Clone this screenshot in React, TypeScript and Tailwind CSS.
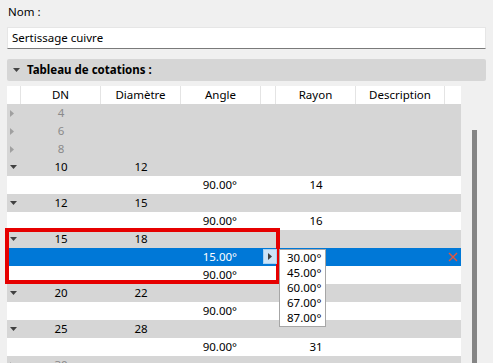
import React from "react";

type Row =
  | { kind: "group"; dn: string; diam?: string; open: boolean }
  | { kind: "sub"; angle: string; rayon?: string; selected?: boolean };

const rows: Row[] = [
  { kind: "group", dn: "4", open: false },
  { kind: "group", dn: "6", open: false },
  { kind: "group", dn: "8", open: false },
  { kind: "group", dn: "10", diam: "12", open: true },
  { kind: "sub", angle: "90.00°", rayon: "14" },
  { kind: "group", dn: "12", diam: "15", open: true },
  { kind: "sub", angle: "90.00°", rayon: "16" },
  { kind: "group", dn: "15", diam: "18", open: true },
  { kind: "sub", angle: "15.00°", selected: true },
  { kind: "sub", angle: "90.00°" },
  { kind: "group", dn: "20", diam: "22", open: true },
  { kind: "sub", angle: "90.00°" },
  { kind: "group", dn: "25", diam: "28", open: true },
  { kind: "sub", angle: "90.00°", rayon: "31" },
  { kind: "group", dn: "30", open: false },
];

const cols = "grid grid-cols-[14px_80px_80px_80px_15px_80px_89px_16px]";

function Caret({ open, className }: { open: boolean; className?: string }) {
  return open ? (
    <svg width="7" height="4" viewBox="0 0 7 4" className={className}>
      <path d="M0 0h7L3.5 4z" fill="currentColor" />
    </svg>
  ) : (
    <svg width="4" height="7" viewBox="0 0 4 7" className={className}>
      <path d="M0 0v7l4-3.5z" fill="currentColor" />
    </svg>
  );
}

export default function App() {
  return (
    <div className="h-[363px] w-[493px] overflow-hidden bg-[#f0f0f0] text-[11.5px] text-black [font-family:'Noto_Sans',sans-serif]">
      <div className="pl-2 pt-[3px] leading-[18px]">Nom :</div>

      <div className="mx-[7px] mt-[6px] flex h-[22px] items-center border border-b-[#7a7a7a] border-[#e6e6e6] bg-white pl-[4px]">
        Sertissage cuivre
      </div>

      <div className="mx-[7px] mt-[10px] flex h-[22px] items-center rounded-[2px] bg-[#d6d6d6] pl-[6px] font-bold">
        <Caret open className="mr-[7px] text-[#444]" />
        Tableau de cotations :
      </div>

      <div className="mt-[5px] flex">
        <div className="relative ml-[7px] w-[454px]">
          <div className={`${cols} h-[18px] bg-white leading-[18px]`}>
            <div className="border-r border-[#e4e4e4]" />
            <div className="border-r border-[#e4e4e4] text-center">DN</div>
            <div className="border-r border-[#e4e4e4] text-center">Diamètre</div>
            <div className="border-r border-[#e4e4e4] text-center">Angle</div>
            <div className="border-r border-[#e4e4e4]" />
            <div className="border-r border-[#e4e4e4] text-center">Rayon</div>
            <div className="border-r border-[#e4e4e4] text-center">Description</div>
            <div />
          </div>

          {rows.map((r, i) =>
            r.kind === "group" ? (
              <div key={i} className={`${cols} h-[18px] items-center bg-[#d6d6d6] leading-[18px] ${r.open ? "text-black" : "text-[#8a8a8a]"}`}>
                <div className="flex items-center pl-[3px]">
                  <Caret open={r.open} className={r.open ? "text-[#404040]" : "text-[#a0a0a0]"} />
                </div>
                <div className="text-center">{r.dn}</div>
                <div className="text-center">{r.diam ?? ""}</div>
                <div />
                <div />
                <div />
                <div />
                <div />
              </div>
            ) : (
              <div key={i} className={`${cols} h-[18px] items-center leading-[18px] ${r.selected ? "bg-[#0078d7] text-white" : "bg-white"}`}>
                <div />
                <div />
                <div />
                <div className="pr-[24px] text-right">{r.angle}</div>
                <div />
                <div className="text-center">{r.rayon ?? ""}</div>
                <div />
                <div className="flex items-center justify-center">
                  {r.selected && (
                    <svg width="10" height="10" viewBox="0 0 10 10">
                      <path d="M1 1l8 8M9 1l-8 8" stroke="#e8553a" strokeWidth="1.4" />
                    </svg>
                  )}
                </div>
              </div>
            )
          )}

          {/* highlight frame */}
          <div className="absolute left-[-2px] top-[142px] h-[56px] w-[275px] border-[4px] border-[#e60000]" />

          {/* dropdown button */}
          <div className="absolute left-[256px] top-[163px] flex h-[15px] w-[14px] items-center justify-center border border-[#a8d0f0] bg-[#cde4f7]">
            <Caret open={false} className="text-[#404040]" />
          </div>

          {/* dropdown list */}
          <div className="absolute left-[272px] top-[163px] w-[47px] border border-[#a6a6a6] bg-white pb-[1px] pl-[7px] leading-[15px]">
            {["30.00°", "45.00°", "60.00°", "67.00°", "87.00°"].map((v) => (
              <div key={v}>{v}</div>
            ))}
          </div>
        </div>

        <div className="pl-[11px]">
          <div className="mt-[44px] h-[240px] w-[5px] bg-[#858585]" />
        </div>
      </div>
    </div>
  );
}
